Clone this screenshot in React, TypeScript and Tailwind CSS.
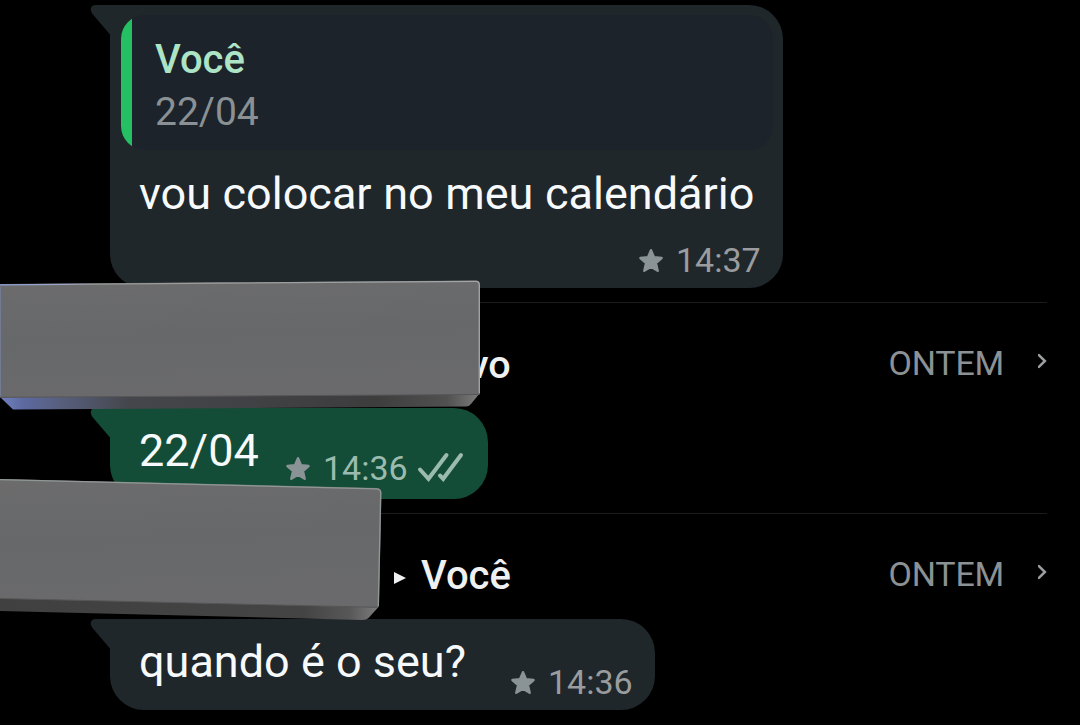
import type { ReactNode } from 'react'
import clsx from 'clsx'

function Star() {
  return (
    <svg width="26" height="26" viewBox="0 0 26 26" className="mt-0.5 shrink-0">
      <path
        d="M13 2.2 L16 9.3 L23.6 10 L17.9 15 L19.7 22.8 L13 18.7 L6.3 22.8 L8.1 15 L2.4 10 L10 9.3 Z"
        fill="#8a9396"
        stroke="#8a9396"
        strokeWidth="2.4"
        strokeLinejoin="round"
      />
    </svg>
  )
}

function DoubleCheck() {
  return (
    <svg
      width="48"
      height="32"
      viewBox="0 0 48 32"
      fill="none"
      className="shrink-0"
      stroke="#9cbbaf"
      strokeWidth="4"
      strokeLinecap="round"
    >
      <path d="M4 17.5 L12.5 26.8 L30.5 3" />
      <path d="M24 23.5 L27.2 26.8 L45 3" />
    </svg>
  )
}

function Chevron() {
  return (
    <svg width="10" height="16" viewBox="0 0 10 16" fill="none" stroke="#9a9fa1" strokeWidth="2.5">
      <path d="M0.9 2.2 L6.9 8 L0.9 13.8" strokeLinecap="round" />
    </svg>
  )
}

function Time({ value, sent }: { value: string; sent?: boolean }) {
  return (
    <div className={clsx('flex h-10 items-center text-[34px] leading-10', sent ? 'text-[#9cbbaf]' : 'text-[#9a9c9e]')}>
      <Star />
      <span className="ml-3 w-[85px] whitespace-nowrap">{value}</span>
      {sent && (
        <span className="ml-2">
          <DoubleCheck />
        </span>
      )}
    </div>
  )
}

function Bubble({ sent, className, children }: { sent?: boolean; className?: string; children: ReactNode }) {
  return (
    <div
      className={clsx(
        'relative ml-[110px] rounded-r-[34px] rounded-bl-[34px] text-[#f7fafc]',
        sent ? 'bg-[#144d37]' : 'bg-[#20272a]',
        className,
      )}
    >
      <svg width="21" height="32" viewBox="0 0 21 32" className="absolute top-0 -left-5">
        <path d="M21 0 H5 Q0.5 0.5 0.8 5 Q1 7 2.5 9 L20 29.5 H21 Z" fill={sent ? '#144d37' : '#20272a'} />
      </svg>
      {children}
    </div>
  )
}

function ChatHeader({ children }: { children: ReactNode }) {
  return (
    <div className="mr-[33px] flex h-[106px] items-center border-t border-[#1b1b1b] pt-3.5">
      <div className="flex items-center pt-1 text-[39.5px] leading-[46px] font-medium text-[#eef0f1]">{children}</div>
      <span className="ml-auto text-[34px] leading-10 tracking-[-0.2px] text-[#8b9194]">ONTEM</span>
      <span className="mb-1 ml-[34px] -mr-px">
        <Chevron />
      </span>
    </div>
  )
}

function Slabs() {
  return (
    <svg width="490" height="350" viewBox="0 275 490 350" className="absolute top-[275px] left-0">
      <defs>
        <linearGradient id="face" x1="0" y1="0" x2="0.15" y2="1">
          <stop offset="0" stopColor="#6c6c6d" />
          <stop offset="0.5" stopColor="#67686a" />
          <stop offset="1" stopColor="#6a6a6c" />
        </linearGradient>
        <linearGradient id="edgeA">
          <stop offset="0" stopColor="#7180c0" />
          <stop offset="0.05" stopColor="#5c69a0" />
          <stop offset="0.12" stopColor="#58607f" />
          <stop offset="0.27" stopColor="#45464b" />
          <stop offset="0.78" stopColor="#3d3d3e" />
          <stop offset="0.93" stopColor="#505051" />
          <stop offset="1" stopColor="#7d7d7d" />
        </linearGradient>
        <linearGradient id="edgeB">
          <stop offset="0" stopColor="#404041" />
          <stop offset="0.8" stopColor="#444445" />
          <stop offset="0.92" stopColor="#575758" />
          <stop offset="1" stopColor="#7d7d7d" />
        </linearGradient>
        <linearGradient id="rim">
          <stop offset="0" stopColor="#8b9cd8" />
          <stop offset="0.12" stopColor="#9ba6ca" />
          <stop offset="0.2" stopColor="#979898" />
          <stop offset="1" stopColor="#a2a6a6" />
        </linearGradient>
      </defs>

      <path d="M0 394 L480 390 V393 L471 404 Q469 406.5 466 406.5 L13 409.5 L0 397 Z" fill="url(#edgeA)" />
      <path d="M0 284 L476 280.5 Q480 280.5 480 285 V394.5 L0 397.5 Z" fill="url(#face)" />
      <path d="M1 397.3 L478 394.5" stroke="#565657" />
      <path d="M0 284.8 L476 281.3 Q479.3 281.3 479.3 285 V393" fill="none" stroke="url(#rim)" strokeWidth="1.3" />
      <path d="M0.5 287 V396" stroke="#737a93" />

      <path d="M0 597 L379 603 L378.5 607 L368.5 618 Q366.5 620 362 620 L0 611 Z" fill="url(#edgeB)" />
      <path d="M0 479 L377 488 Q381.5 488.5 381.5 493 L379 606 L377 607.5 L0 598.5 Z" fill="url(#face)" />
      <path d="M0 598.5 L377 607.3" stroke="#565657" />
      <path d="M0 479.7 L377 488.8 Q380.7 489.3 380.7 493 L378.3 606" fill="none" stroke="#909896" strokeWidth="1.3" />
    </svg>
  )
}

export default function App() {
  return (
    <div className="relative h-[725px] w-[1080px] overflow-hidden bg-black pt-[5px] font-[Roboto,sans-serif]">
      <Bubble className="h-[283px] w-[673px] pt-[10px]">
        <div className="ml-[11px] flex h-[135px] w-[652px] overflow-hidden rounded-3xl bg-[#1d232a]">
          <div className="w-[11px] shrink-0 bg-[#25c063]" />
          <div className="pt-[18px] pl-[23px] text-[39px] leading-[53px]">
            <p className="text-[40px] font-medium text-[#aee4c6]">Você</p>
            <p className="text-[#8a9195]">22/04</p>
          </div>
        </div>
        <p className="mt-[14px] ml-[29px] text-[45px] leading-[60px] [word-spacing:0.4px] whitespace-nowrap">
          vou colocar no meu calendário
        </p>
        <div className="mt-4 flex justify-end pr-[22px]">
          <Time value="14:37" />
        </div>
      </Bubble>

      <div className="mt-[14px]">
        <ChatHeader>
          <span className="ml-[469px]">vo</span>
        </ChatHeader>
      </div>
      <Bubble sent className="flex h-[91px] w-[378px] pl-[29px]">
        <p className="mt-[13px] w-[146px] text-[45px] leading-[60px]">22/04</p>
        <div className="mt-10">
          <Time value="14:36" sent />
        </div>
      </Bubble>

      <div className="mt-[14px]">
        <ChatHeader>
          <svg width="12" height="12" viewBox="0 0 12 12" className="mt-1 ml-[394px]">
            <path d="M0 0 L12 6 L0 12 Z" fill="#eef0f1" />
          </svg>
          <span className="ml-[15px] text-[40px]">Você</span>
        </ChatHeader>
      </div>
      <Bubble className="flex h-[91px] w-[545px] pl-[29px]">
        <p className="mt-[13px] w-[371px] text-[45px] leading-[60px] whitespace-nowrap">quando é o seu?</p>
        <div className="mt-[43px]">
          <Time value="14:36" />
        </div>
      </Bubble>

      <Slabs />
    </div>
  )
}
